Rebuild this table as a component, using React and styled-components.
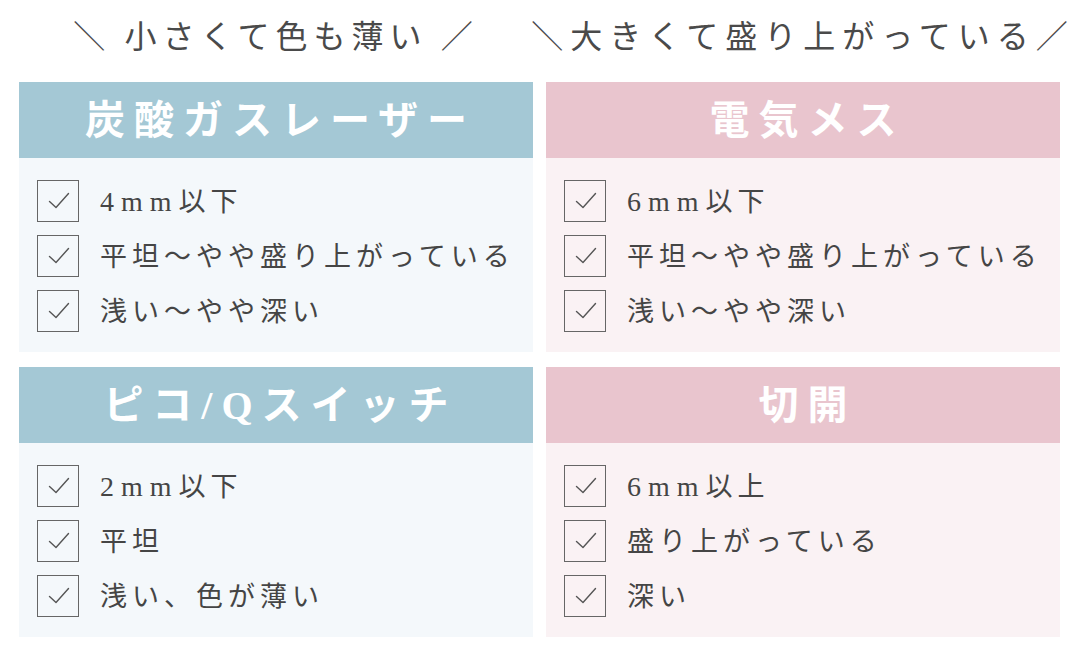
import React from 'react';
import styled, { createGlobalStyle } from 'styled-components';

const GlobalStyle = createGlobalStyle`
	html, body {
		margin: 0;
		padding: 0;
		background: #ffffff;
	}
	body {
		font-family: "Liberation Serif", "Noto Sans CJK JP", serif;
		color: #444;
	}
`;

const Page = styled.div`
	width: 1080px;
	height: 657px;
	display: grid;
	grid-template-columns: 514px 514px;
	column-gap: 13px;
	padding-left: 19px;
	box-sizing: border-box;
`;

const Column = styled.div`
	display: flex;
	flex-direction: column;
`;

const Caption = styled.div`
	height: 82px;
	padding-bottom: 14px;
	box-sizing: border-box;
	display: flex;
	align-items: center;
	justify-content: center;
	font-family: "Noto Sans CJK JP", sans-serif;
	font-size: 32px;
	letter-spacing: ${(props) => props.spacing}px;
	color: #4a4a4a;
	white-space: nowrap;
`;

const Card = styled.section`
	display: flex;
	flex-direction: column;
	margin-bottom: 15px;
`;

const Header = styled.h2`
	margin: 0;
	height: 76px;
	box-sizing: border-box;
	padding: 0 0 6px 9px;
	display: flex;
	align-items: center;
	justify-content: center;
	background: ${(props) => (props.tone === 'pink' ? '#e9c5ce' : '#a4c8d5')};
	color: #ffffff;
	font-family: "Liberation Serif", "Noto Sans CJK JP", serif;
	font-weight: 700;
	font-size: 40px;
	letter-spacing: 9px;
`;

const Body = styled.ul`
	list-style: none;
	margin: 0;
	padding: 22px 0 20px 18px;
	display: flex;
	flex-direction: column;
	gap: 13px;
	background: ${(props) => (props.tone === 'pink' ? '#faf2f4' : '#f4f8fb')};
`;

const Item = styled.li`
	display: flex;
	align-items: center;
	gap: 21px;
	height: 42px;
	font-size: 27px;
	letter-spacing: 5px;
	color: #454545;
	white-space: nowrap;
`;

const Label = styled.span`
	padding-bottom: 3px;
`;

const Unit = styled.span`
	letter-spacing: 7px;
	font-size: 28px;
`;

const Box = styled.span`
	width: 42px;
	height: 42px;
	box-sizing: border-box;
	border: 1.5px solid #666;
	display: flex;
	flex-shrink: 0;
`;

const Check = () => (
	<Box>
		<svg width="39" height="39" viewBox="0 0 39 39">
			<path d="M11.5 20.5 L18 26.5 L30.5 12.5" fill="none" stroke="#555" strokeWidth="1.4" strokeLinecap="round" strokeLinejoin="round" />
		</svg>
	</Box>
);

const renderText = (text) => {
	const match = text.match(/^(\d+mm)(.*)$/);
	if (!match) return text;
	return (
		<React.Fragment>
			<Unit>{match[1]}</Unit>
			{match[2]}
		</React.Fragment>
	);
};

const cards = [
	{
		caption: '＼ 小さくて色も薄い ／',
		spacing: 6,
		tone: 'blue',
		items: [
			{ title: '炭酸ガスレーザー', list: ['4mm以下', '平坦〜やや盛り上がっている', '浅い〜やや深い'] },
			{ title: 'ピコ/Qスイッチ', list: ['2mm以下', '平坦', '浅い、色が薄い'] }
		]
	},
	{
		caption: '＼大きくて盛り上がっている／',
		spacing: 7,
		tone: 'pink',
		items: [
			{ title: '電気メス', list: ['6mm以下', '平坦〜やや盛り上がっている', '浅い〜やや深い'] },
			{ title: '切開', list: ['6mm以上', '盛り上がっている', '深い'] }
		]
	}
];

const App = () => (
	<React.Fragment>
		<GlobalStyle />
		<Page>
			{cards.map((col) => (
				<Column key={col.caption}>
					<Caption spacing={col.spacing}>{col.caption}</Caption>
					{col.items.map((card) => (
						<Card key={card.title}>
							<Header tone={col.tone}>{card.title}</Header>
							<Body tone={col.tone}>
								{card.list.map((text) => (
									<Item key={text}>
										<Check />
										<Label>{renderText(text)}</Label>
									</Item>
								))}
							</Body>
						</Card>
					))}
				</Column>
			))}
		</Page>
	</React.Fragment>
);

export default App;
